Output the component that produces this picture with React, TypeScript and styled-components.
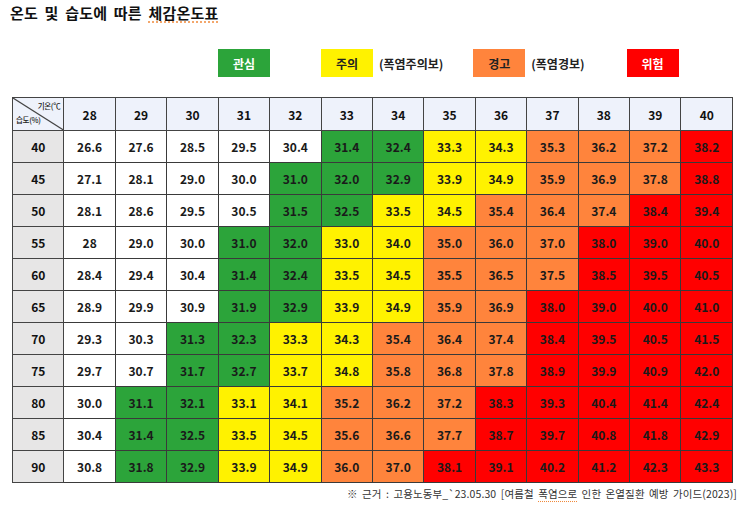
import React from 'react';
import styled, { createGlobalStyle } from 'styled-components';

type Level = 'none' | 'green' | 'yellow' | 'orange' | 'red';

const GlobalStyle = createGlobalStyle`
  html, body {
    margin: 0;
    padding: 0;
    background: #fff;
  }
  body {
    font-family: 'Noto Sans CJK KR', 'Noto Sans', sans-serif;
    color: #111;
  }
`;

const palette: Record<Level, string> = {
  none: '#ffffff',
  green: '#2ca43a',
  yellow: '#fff200',
  orange: '#ff843c',
  red: '#ff0000',
};

const Page = styled.div`
  width: 743px;
  height: 505px;
  box-sizing: border-box;
  padding: 3px 10px 0 12px;
  display: flex;
  flex-direction: column;
`;

const Title = styled.h1`
  margin: 0 0 0 -2px;
  font-size: 15px;
  font-weight: 700;
  line-height: 20px;
  letter-spacing: 0.2px;
  word-spacing: 3px;
  color: #111;
`;

const Squiggle = styled.span`
  text-decoration: underline dotted #f08a3c;
  text-underline-offset: 3px;
`;

const Legend = styled.div`
  display: flex;
  align-items: center;
  height: 28px;
  margin: 26px 0 0 206px;
`;

const Badge = styled.div<{ $level: Level; $gap: number }>`
  width: 52px;
  height: 28px;
  margin-left: ${({ $gap }) => $gap}px;
  display: flex;
  align-items: center;
  justify-content: center;
  font-size: 12px;
  font-weight: 700;
  background: ${({ $level }) => palette[$level]};
  color: ${({ $level }) => ($level === 'green' || $level === 'red' ? '#fff' : '#222')};
`;

const Note = styled.span`
  margin-left: 6px;
  font-size: 12px;
  font-weight: 700;
  color: #222;
`;

const Table = styled.table`
  margin-top: 20px;
  width: 721px;
  table-layout: fixed;
  border-collapse: collapse;
  border: 1.5px solid #333;
`;

const HeadCell = styled.th`
  height: 32px;
  padding: 0;
  background: #eef2fb;
  border: 1px solid #444;
  font-size: 12px;
  font-weight: 700;
  color: #111;
`;

const Corner = styled.th`
  position: relative;
  height: 32px;
  padding: 0;
  background: #eef2fb;
  border: 1px solid #444;
  overflow: hidden;
`;

const CornerLabel = styled.span<{ $top?: boolean }>`
  position: absolute;
  font-size: 7.5px;
  font-weight: 500;
  letter-spacing: -0.3px;
  white-space: nowrap;
  color: #222;
  ${({ $top }) => ($top ? 'top: 2px; right: 3px;' : 'bottom: 5px; left: 3px;')}
`;

const Diagonal = styled.svg`
  position: absolute;
  inset: 0;
  width: 100%;
  height: 100%;
`;

const RowHead = styled.td`
  height: 31px;
  padding: 0;
  text-align: center;
  background: #e7e6e6;
  border: 1px solid #444;
  font-size: 12px;
  font-weight: 700;
  color: #111;
`;

const Cell = styled.td<{ $level: Level }>`
  height: 31px;
  padding: 0;
  text-align: center;
  background: ${({ $level }) => palette[$level]};
  border: 1px solid #3a3a3a;
  font-size: 12px;
  font-weight: 700;
  color: #1a1a1a;
`;

const Source = styled.div`
  margin-top: 3px;
  align-self: flex-end;
  margin-right: -4px;
  font-size: 10.5px;
  color: #333;
  letter-spacing: 0.1px;
  word-spacing: 2px;
`;

const temps = [28, 29, 30, 31, 32, 33, 34, 35, 36, 37, 38, 39, 40];

const rows: { rh: number; values: string[] }[] = [
  { rh: 40, values: ['26.6', '27.6', '28.5', '29.5', '30.4', '31.4', '32.4', '33.3', '34.3', '35.3', '36.2', '37.2', '38.2'] },
  { rh: 45, values: ['27.1', '28.1', '29.0', '30.0', '31.0', '32.0', '32.9', '33.9', '34.9', '35.9', '36.9', '37.8', '38.8'] },
  { rh: 50, values: ['28.1', '28.6', '29.5', '30.5', '31.5', '32.5', '33.5', '34.5', '35.4', '36.4', '37.4', '38.4', '39.4'] },
  { rh: 55, values: ['28', '29.0', '30.0', '31.0', '32.0', '33.0', '34.0', '35.0', '36.0', '37.0', '38.0', '39.0', '40.0'] },
  { rh: 60, values: ['28.4', '29.4', '30.4', '31.4', '32.4', '33.5', '34.5', '35.5', '36.5', '37.5', '38.5', '39.5', '40.5'] },
  { rh: 65, values: ['28.9', '29.9', '30.9', '31.9', '32.9', '33.9', '34.9', '35.9', '36.9', '38.0', '39.0', '40.0', '41.0'] },
  { rh: 70, values: ['29.3', '30.3', '31.3', '32.3', '33.3', '34.3', '35.4', '36.4', '37.4', '38.4', '39.5', '40.5', '41.5'] },
  { rh: 75, values: ['29.7', '30.7', '31.7', '32.7', '33.7', '34.8', '35.8', '36.8', '37.8', '38.9', '39.9', '40.9', '42.0'] },
  { rh: 80, values: ['30.0', '31.1', '32.1', '33.1', '34.1', '35.2', '36.2', '37.2', '38.3', '39.3', '40.4', '41.4', '42.4'] },
  { rh: 85, values: ['30.4', '31.4', '32.5', '33.5', '34.5', '35.6', '36.6', '37.7', '38.7', '39.7', '40.8', '41.8', '42.9'] },
  { rh: 90, values: ['30.8', '31.8', '32.9', '33.9', '34.9', '36.0', '37.0', '38.1', '39.1', '40.2', '41.2', '42.3', '43.3'] },
];

// 체감온도 구간별 단계
const levelOf = (v: string): Level => {
  const n = parseFloat(v);
  if (n >= 38) return 'red';
  if (n >= 35) return 'orange';
  if (n >= 33) return 'yellow';
  if (n >= 31) return 'green';
  return 'none';
};

const App: React.FC = () => (
  <>
    <GlobalStyle />
    <Page>
      <Title>
        온도 및 습도에 따른 <Squiggle>체감온도표</Squiggle>
      </Title>

      <Legend>
        <Badge $level="green" $gap={0}>관심</Badge>
        <Badge $level="yellow" $gap={51}>주의</Badge>
        <Note>(폭염주의보)</Note>
        <Badge $level="orange" $gap={30}>경고</Badge>
        <Note>(폭염경보)</Note>
        <Badge $level="red" $gap={42}>위험</Badge>
      </Legend>

      <Table>
        <thead>
          <tr>
            <Corner>
              <Diagonal viewBox="0 0 100 100" preserveAspectRatio="none">
                <line x1="0" y1="0" x2="100" y2="100" stroke="#444" strokeWidth="1.2" vectorEffect="non-scaling-stroke" />
              </Diagonal>
              <CornerLabel $top>기온(℃</CornerLabel>
              <CornerLabel>습도(%)</CornerLabel>
            </Corner>
            {temps.map((t) => (
              <HeadCell key={t}>{t}</HeadCell>
            ))}
          </tr>
        </thead>
        <tbody>
          {rows.map(({ rh, values }) => (
            <tr key={rh}>
              <RowHead>{rh}</RowHead>
              {values.map((v, i) => (
                <Cell key={i} $level={levelOf(v)}>
                  {v}
                </Cell>
              ))}
            </tr>
          ))}
        </tbody>
      </Table>

      <Source>
        ※ 근거 : 고용노동부_`23.05.30 [여름철 <Squiggle>폭염으로</Squiggle> 인한 온열질환 예방 가이드(2023)]
      </Source>
    </Page>
  </>
);

export default App;
